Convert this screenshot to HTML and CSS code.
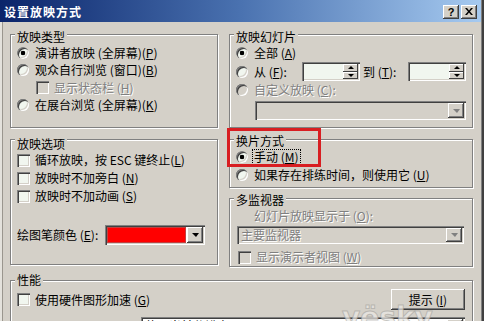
FILE: index.html
```html
<!DOCTYPE html>
<html lang="zh-CN">
<head>
<meta charset="UTF-8" />
<title>设置放映方式</title>
<link rel="stylesheet" href="styles.css">
</head>
<body>

<div class="dialog">
  <div class="titlebar">
    <span class="title">设置放映方式</span>
    <span class="tbtn help">?</span>
    <span class="tbtn close">
      <svg width="8" height="7" viewBox="0 0 8 7"><path d="M0 0h2l2 2.4L6 0h2L5 3.5 8 7H6L4 4.6 2 7H0l3-3.5z" fill="#000"/></svg>
    </span>
  </div>

  <div class="body">
    <div class="col">
      <div class="group g-type">
        <div class="legend">放映类型</div>
        <div class="row"><span class="radio on"></span>演讲者放映 (全屏幕)(<u>P</u>)</div>
        <div class="row"><span class="radio"></span>观众自行浏览 (窗口)(<u>B</u>)</div>
        <div class="row sub off"><span class="check"></span>显示状态栏 (<u>H</u>)</div>
        <div class="row"><span class="radio"></span>在展台浏览 (全屏幕)(<u>K</u>)</div>
      </div>

      <div class="group g-options">
        <div class="legend">放映选项</div>
        <div class="row"><span class="check"></span>循环放映，按 ESC 键终止(<u>L</u>)</div>
        <div class="row"><span class="check"></span>放映时不加旁白 (<u>N</u>)</div>
        <div class="row"><span class="check"></span>放映时不加动画 (<u>S</u>)</div>
        <div class="row pen">
          绘图笔颜色 (<u>E</u>):
          <span class="field color-pick">
            <span class="swatch"></span>
            <span class="drop"></span>
          </span>
        </div>
      </div>
    </div>

    <div class="col">
      <div class="group g-slides">
        <div class="legend">放映幻灯片</div>
        <div class="row"><span class="radio on"></span>全部 (<u>A</u>)</div>
        <div class="row range">
          <span class="radio"></span><span class="from">从 (<u>F</u>):</span>
          <span class="field spin"><span class="spin-btns"><span class="sb up"></span><span class="sb down"></span></span></span>
          <span class="to">到 (<u>T</u>):</span>
          <span class="field spin"><span class="spin-btns"><span class="sb up"></span><span class="sb down"></span></span></span>
        </div>
        <div class="row off"><span class="radio"></span>自定义放映 (<u>C</u>):</div>
        <div class="field combo disabled custom"><span class="combo-text"></span><span class="drop"></span></div>
      </div>

      <div class="group g-advance">
        <div class="legend">换片方式</div>
        <div class="row"><span class="radio on"></span><span class="focus">手动 (<u>M</u>)</span></div>
        <div class="row"><span class="radio"></span>如果存在排练时间，则使用它 (<u>U</u>)</div>
      </div>

      <div class="group g-monitor">
        <div class="legend">多监视器</div>
        <div class="row off indent">幻灯片放映显示于 (<u>O</u>):</div>
        <div class="field combo disabled monitor"><span class="combo-text">主要监视器</span><span class="drop"></span></div>
        <div class="row off presenter"><span class="check"></span>显示演示者视图 (<u>W</u>)</div>
      </div>
    </div>

    <div class="group g-perf">
      <div class="legend">性能</div>
      <div class="perf-row">
        <div class="row"><span class="check"></span>使用硬件图形加速 (<u>G</u>)</div>
        <span class="button">提示 (<u>I</u>)</span>
      </div>
      <div class="res-row">
        <span>幻灯片放映分辨率 (<u>R</u>):</span>
        <div class="field combo res"><span class="combo-text">使用当前分辨率</span><span class="drop"></span></div>
      </div>
    </div>
  </div>

  <div class="mark"></div>
  <div class="watermark">yësky</div>
</div>

</body>
</html>
```

FILE: styles.css
```css
* {
  box-sizing: border-box;
}
body {
  margin: 0;
  font-family: "Noto Sans CJK SC", "Liberation Sans", sans-serif;
  font-size: 12px;
  line-height: 14px;
  color: #000;
  background: #d4d0c8;
}
u {
  text-decoration: underline;
}

.dialog {
  position: relative;
  width: 484px;
  height: 321px;
  overflow: hidden;
  background: #d4d0c8;
  border-right: 2px solid #404040;
  box-shadow: inset -1px 0 #808080;
}

/* title bar */
.titlebar {
  height: 22px;
  display: flex;
  align-items: center;
  gap: 2px;
  padding: 1px 4px 0 4px;
  margin-right: 1px;
  background: linear-gradient(to right, #0a246a, #4a72b0 50%, #a6caf0);
  color: #fff;
}
.title {
  flex: 1;
  font-weight: bold;
  letter-spacing: 1px;
}
.tbtn {
  width: 16px;
  height: 14px;
  display: flex;
  align-items: center;
  justify-content: center;
  background: #d4d0c8;
  color: #000;
  font-family: "Liberation Sans", sans-serif;
  font-weight: bold;
  font-size: 11px;
  box-shadow: inset -1px -1px #404040, inset 1px 1px #fff, inset -2px -2px #808080, inset 2px 2px #d4d0c8;
}

/* dialog body */
.body {
  display: grid;
  grid-template-columns: 208px 244px;
  column-gap: 11px;
  padding: 12px 0 0 8px;
  border-left: 2px solid #e4e2dc;
  box-shadow: inset 1px 0 #9a968e;
  height: 299px;
}
.col {
  display: flex;
  flex-direction: column;
}

.group {
  border: 1px solid #808080;
  box-shadow: inset 1px 1px #fff, 1px 1px #fff;
  padding: 0 6px;
}
.legend {
  width: fit-content;
  margin: -8px 0 0 -2px;
  padding: 0 2px;
  background: #d4d0c8;
}

.g-type { height: 94px; padding-top: 3px; }
.g-type .row { height: 17.5px; }
.g-options { height: 126px; margin-top: 11px; padding-top: 5px; }
.g-slides { height: 94px; padding-top: 3px; }
.g-advance { height: 49px; margin-top: 11px; padding-top: 2px; }
.g-monitor { height: 69px; margin-top: 10px; padding-top: 2px; }
.g-perf {
  grid-column: 1 / -1;
  margin-top: 13px;
  height: 60px;
  padding-right: 7px;
}

.row {
  height: 18px;
  display: flex;
  align-items: center;
  white-space: nowrap;
}
.row .radio {
  margin-right: 6px;
}
.row .check {
  margin-right: 5px;
}
.sub {
  padding-left: 19px;
}
.indent {
  padding-left: 18px;
}
.off {
  color: #808080;
  text-shadow: 1px 1px #fff;
}

/* radio buttons and check boxes */
.radio {
  flex: none;
  width: 12px;
  height: 12px;
  border-radius: 50%;
  background: #f1f6ef;
  box-shadow: inset 1px 1px #808080, inset 2px 2px #404040, inset -1px -1px #fff, inset -2px -2px #d4d0c8;
}
.radio.on {
  background: radial-gradient(circle, #000 0 2px, transparent 2.6px), #f1f6ef;
}
.off .radio {
  background: #d4d0c8;
}
.check {
  flex: none;
  width: 13px;
  height: 13px;
  background: #f1f6ef;
  box-shadow: inset 1px 1px #808080, inset 2px 2px #404040, inset -1px -1px #fff, inset -2px -2px #d4d0c8;
}
.off .check {
  background: #d4d0c8;
}

/* sunken fields */
.field {
  display: flex;
  padding: 2px;
  background: #f1f6ef;
  box-shadow: inset 1px 1px #808080, inset 2px 2px #404040, inset -1px -1px #fff, inset -2px -2px #d4d0c8;
}
.field.disabled {
  background: #d4d0c8;
  color: #808080;
  text-shadow: 1px 1px #fff;
}
.drop {
  flex: none;
  width: 16px;
  display: flex;
  align-items: center;
  justify-content: center;
  background: #d4d0c8;
  box-shadow: inset -1px -1px #404040, inset 1px 1px #fff, inset -2px -2px #808080, inset 2px 2px #d4d0c8;
}
.drop::after {
  content: "";
  border-left: 4px solid transparent;
  border-right: 3px solid transparent;
  border-top: 4px solid #000;
}
.disabled .drop::after {
  border-top-color: #808080;
}
.combo-text {
  flex: 1;
  padding-left: 2px;
  line-height: 14px;
  white-space: nowrap;
}

/* pen colour */
.pen {
  margin-top: 20px;
  height: 20px;
}
.color-pick {
  margin-left: 7px;
  width: 100px;
  height: 20px;
  background: #fff;
}
.swatch {
  flex: 1;
  margin: 1px 2px 1px 1px;
  background: #f00;
  box-shadow: 0 0 0 1px #c04040;
}

/* slide range */
.range {
  height: 19px;
}
.from {
  width: 48px;
}
.spin {
  width: 58px;
  height: 19px;
  justify-content: flex-end;
}
.spin-btns {
  width: 15px;
  display: flex;
  flex-direction: column;
}
.sb {
  flex: 1;
  display: flex;
  align-items: center;
  justify-content: center;
  background: #d4d0c8;
  box-shadow: inset -1px -1px #404040, inset 1px 1px #fff;
}
.sb::after {
  content: "";
  border-left: 3px solid transparent;
  border-right: 3px solid transparent;
}
.sb.up::after {
  border-bottom: 3px solid #000;
}
.sb.down::after {
  border-top: 3px solid #000;
}
.to {
  width: 48px;
  padding-left: 3px;
}
.custom {
  margin: 2px 0 0 19px;
  width: 211px;
  height: 19px;
}

/* advance */
.focus {
  outline: 1px dotted #000;
  outline-offset: 0;
  padding: 0 1px;
  margin-left: -1px;
}

/* monitors */
.monitor {
  margin: 1px 0 0 1px;
  width: 227px;
  height: 18px;
}
.presenter {
  margin-top: 4px;
  padding-left: 2px;
}

/* performance */
.perf-row {
  display: flex;
  align-items: center;
  justify-content: space-between;
  margin-top: 2px;
  height: 21px;
}
.button {
  width: 74px;
  height: 21px;
  display: flex;
  align-items: center;
  justify-content: center;
  background: #d4d0c8;
  box-shadow: inset -1px -1px #404040, inset 1px 1px #fff, inset -2px -2px #808080, inset 2px 2px #d4d0c8;
}
.res-row {
  display: flex;
  align-items: flex-start;
  justify-content: space-between;
  margin-top: 7px;
  white-space: nowrap;
}
.res-row > span {
  padding-top: 4px;
}
.res {
  width: 324px;
  height: 20px;
  background: #fff;
}

/* annotation + watermark lying over the dialog */
.mark {
  position: absolute;
  left: 227px;
  top: 128px;
  width: 94px;
  height: 39px;
  border: 3px solid #d81e22;
}
.watermark {
  position: absolute;
  left: 342px;
  top: 304px;
  font-family: "DejaVu Sans", sans-serif;
  font-weight: bold;
  font-size: 28px;
  line-height: 28px;
  color: rgba(236, 234, 230, 0.7);
  -webkit-text-stroke: 1px rgba(150, 148, 144, 0.5);
}
```
